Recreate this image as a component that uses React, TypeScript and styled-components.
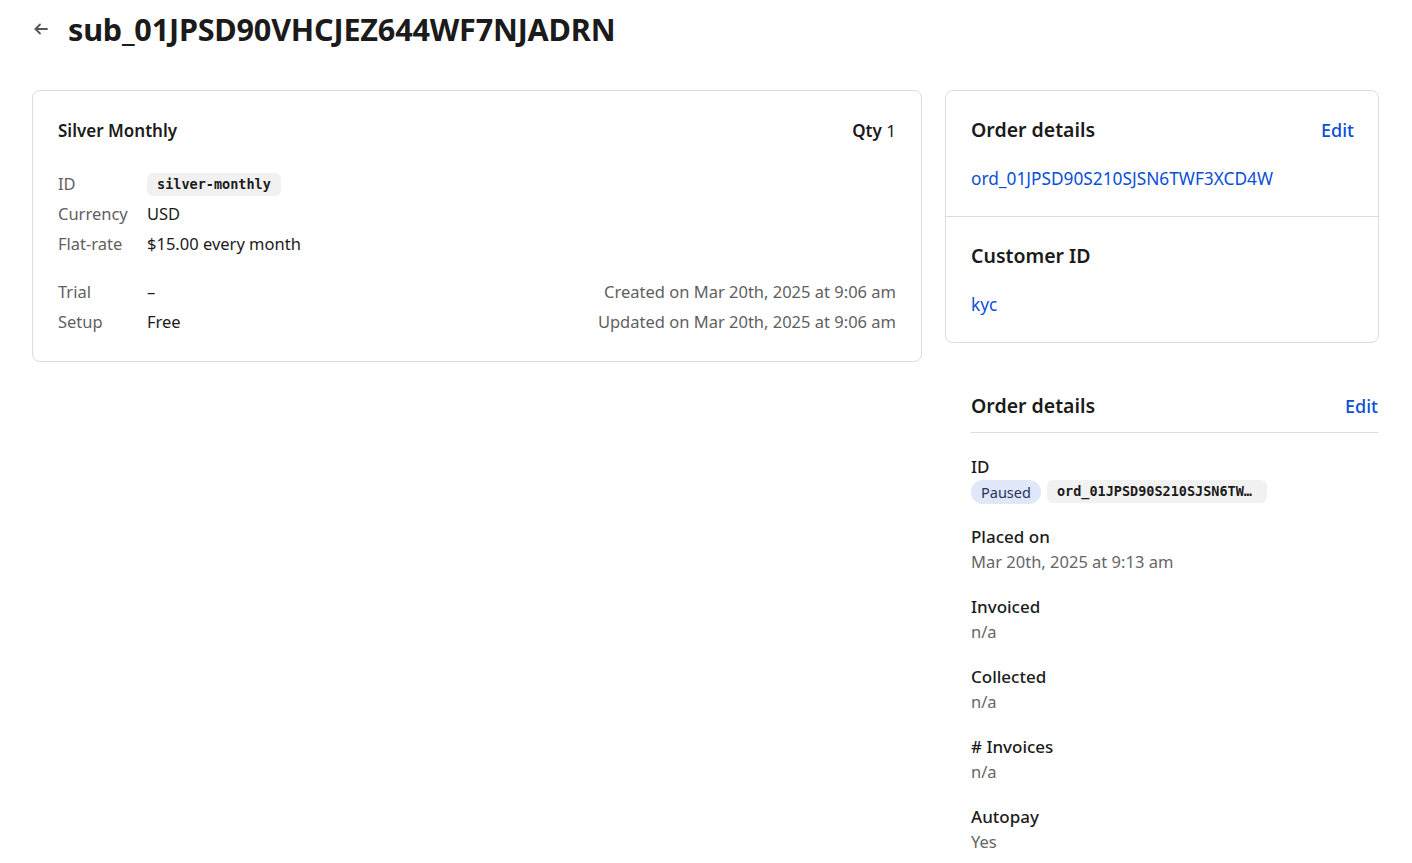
import React from "react";
import styled, { createGlobalStyle } from "styled-components";

const Global = createGlobalStyle`
  html, body { margin: 0; padding: 0; background: #fff; }
  body {
    font-family: "Noto Sans", "Open Sans", sans-serif;
    color: #1b1b1b;
    -webkit-font-smoothing: antialiased;
  }
  * { box-sizing: border-box; }
`;

const Page = styled.div`
  padding: 12px 33px 0 32px;
`;

const Header = styled.div`
  display: flex;
  align-items: center;
  gap: 18px;
  height: 34px;
  margin-bottom: 44px;
`;

const BackButton = styled.button`
  display: flex;
  align-items: center;
  justify-content: center;
  width: 18px;
  height: 18px;
  padding: 0;
  border: none;
  background: none;
  color: #555;
  cursor: pointer;
`;

const Title = styled.h1`
  margin: 0;
  font-size: 30.6px;
  font-weight: 700;
  letter-spacing: -0.2px;
  color: #1b1b1b;
  line-height: 34px;
`;

const Layout = styled.div`
  display: grid;
  grid-template-columns: 1fr 434px;
  gap: 23px;
  align-items: start;
`;

const Card = styled.div`
  border: 1px solid #dcdcdc;
  border-radius: 8px;
  background: #fff;
`;

const PlanCard = styled(Card)`
  padding: 28px 25px 25px 25px;
`;

const PlanHeader = styled.div`
  display: flex;
  justify-content: space-between;
  align-items: center;
  line-height: 24px;
  margin-bottom: 25px;
`;

const PlanName = styled.div`
  font-size: 17px;
  font-weight: 600;
`;

const Qty = styled.div`
  font-size: 17px;
  font-weight: 600;
  span { font-weight: 400; }
`;

const Rows = styled.div<{ $gapTop?: boolean }>`
  display: flex;
  justify-content: space-between;
  margin-top: ${(p) => (p.$gapTop ? "18px" : "0")};
`;

const Grid = styled.div`
  display: grid;
  grid-template-columns: 89px auto;
  grid-auto-rows: 30px;
  align-items: center;
  font-size: 16.5px;
`;

const Label = styled.div`
  color: #5f5f5f;
`;

const Value = styled.div`
  color: #1b1b1b;
`;

const Code = styled.code`
  display: inline-block;
  font-family: "DejaVu Sans Mono", "Liberation Mono", monospace;
  font-size: 13.5px;
  font-weight: 700;
  background: #f1f1f1;
  border-radius: 6px;
  padding: 0 10px;
  line-height: 23px;
  color: #1b1b1b;
  max-width: 220px;
  overflow: hidden;
  text-overflow: ellipsis;
  white-space: nowrap;
  vertical-align: middle;
`;

const Stamps = styled.div`
  display: grid;
  grid-auto-rows: 30px;
  align-items: center;
  justify-items: end;
  font-size: 16.5px;
  color: #5f5f5f;
`;

const Side = styled.div`
  display: flex;
  flex-direction: column;
  gap: 51px;
`;

const Section = styled.div`
  padding: 27px 24px 25px 25px;
  & + & { border-top: 1px solid #dcdcdc; }
`;

const SectionHead = styled.div`
  display: flex;
  justify-content: space-between;
  align-items: center;
  line-height: 24px;
  margin-bottom: 25px;
`;

const SectionTitle = styled.div`
  font-size: 19.5px;
  font-weight: 600;
  color: #1b1b1b;
`;

const Link = styled.a`
  color: #0b4fd6;
  text-decoration: none;
  font-size: 17.3px;
  line-height: 24px;
  cursor: pointer;
`;

const EditLink = styled(Link)`
  font-size: 18px;
  font-weight: 500;
`;

const Details = styled.div`
  padding: 0 1px 0 26px;
`;

const DetailsHead = styled(SectionHead)`
  padding-bottom: 14px;
  margin-bottom: 21px;
  border-bottom: 1px solid #dcdcdc;
`;

const Field = styled.div`
  margin-bottom: 20px;
`;

const FieldLabel = styled.div`
  font-size: 17px;
  font-weight: 500;
  line-height: 25px;
  color: #1b1b1b;
`;

const FieldValue = styled.div`
  font-size: 16.5px;
  line-height: 25px;
  color: #666;
`;

const Pills = styled.div`
  display: flex;
  gap: 6px;
  height: 25px;
  align-items: center;
`;

const StatusPill = styled.span`
  display: inline-block;
  background: #dfe7f8;
  color: #22365c;
  border-radius: 12px;
  padding: 0 10px;
  font-size: 14.5px;
  line-height: 24px;
`;

const ArrowIcon = () => (
  <svg width="16" height="16" viewBox="0 0 16 16" fill="none" stroke="currentColor" strokeWidth="1.8" strokeLinecap="round" strokeLinejoin="round">
    <path d="M14 8H2.5" />
    <path d="M7 3.5L2.5 8L7 12.5" />
  </svg>
);

const fields = [
  { label: "Placed on", value: "Mar 20th, 2025 at 9:13 am" },
  { label: "Invoiced", value: "n/a" },
  { label: "Collected", value: "n/a" },
  { label: "# Invoices", value: "n/a" },
  { label: "Autopay", value: "Yes" },
];

export default function App() {
  return (
    <Page>
      <Global />
      <Header>
        <BackButton aria-label="Back">
          <ArrowIcon />
        </BackButton>
        <Title>sub_01JPSD90VHCJEZ644WF7NJADRN</Title>
      </Header>
      <Layout>
        <PlanCard>
          <PlanHeader>
            <PlanName>Silver Monthly</PlanName>
            <Qty>
              Qty <span>1</span>
            </Qty>
          </PlanHeader>
          <Grid>
            <Label>ID</Label>
            <Value>
              <Code>silver-monthly</Code>
            </Value>
            <Label>Currency</Label>
            <Value>USD</Value>
            <Label>Flat-rate</Label>
            <Value>$15.00 every month</Value>
          </Grid>
          <Rows $gapTop>
            <Grid>
              <Label>Trial</Label>
              <Value>–</Value>
              <Label>Setup</Label>
              <Value>Free</Value>
            </Grid>
            <Stamps>
              <div>Created on Mar 20th, 2025 at 9:06 am</div>
              <div>Updated on Mar 20th, 2025 at 9:06 am</div>
            </Stamps>
          </Rows>
        </PlanCard>
        <Side>
          <Card>
            <Section>
              <SectionHead>
                <SectionTitle>Order details</SectionTitle>
                <EditLink>Edit</EditLink>
              </SectionHead>
              <Link>ord_01JPSD90S210SJSN6TWF3XCD4W</Link>
            </Section>
            <Section>
              <SectionHead>
                <SectionTitle>Customer ID</SectionTitle>
              </SectionHead>
              <Link>kyc</Link>
            </Section>
          </Card>
          <Details>
            <DetailsHead>
              <SectionTitle>Order details</SectionTitle>
              <EditLink>Edit</EditLink>
            </DetailsHead>
            <Field>
              <FieldLabel>ID</FieldLabel>
              <Pills>
                <StatusPill>Paused</StatusPill>
                <Code>ord_01JPSD90S210SJSN6TWF3XCD4W</Code>
              </Pills>
            </Field>
            {fields.map((f) => (
              <Field key={f.label}>
                <FieldLabel>{f.label}</FieldLabel>
                <FieldValue>{f.value}</FieldValue>
              </Field>
            ))}
          </Details>
        </Side>
      </Layout>
    </Page>
  );
}
